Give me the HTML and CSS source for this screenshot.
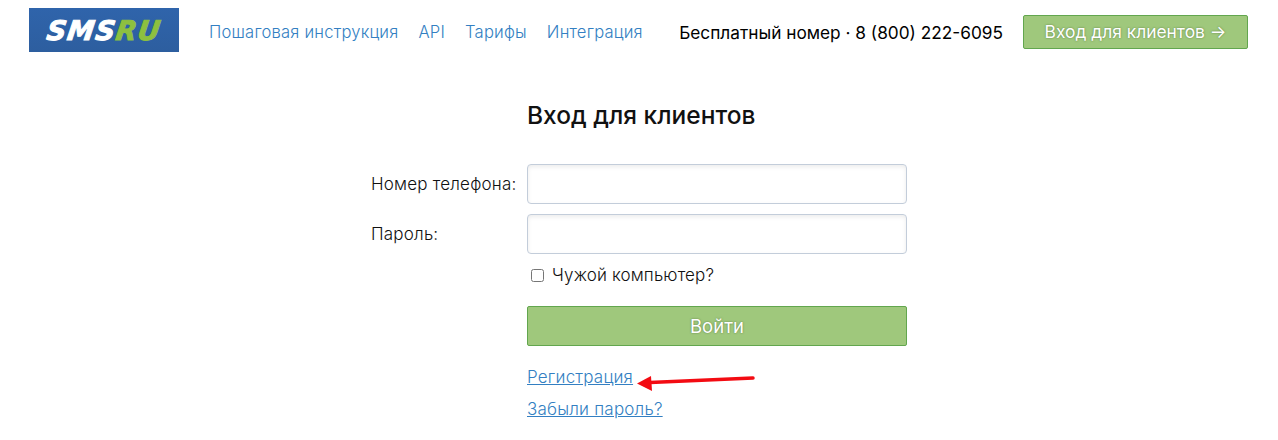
FILE: index.html
```html
<!DOCTYPE html>
<html lang="ru">
<head>
<meta charset="utf-8">
<title>Вход для клиентов</title>
<link rel="stylesheet" href="styles.css">
</head>
<body>
<header class="header">
  <a class="logo" href="#"><span class="logo-sms">SMS</span><span class="logo-ru">RU</span></a>
  <nav class="nav">
    <a href="#">Пошаговая инструкция</a>
    <a href="#">API</a>
    <a href="#">Тарифы</a>
    <a href="#">Интеграция</a>
  </nav>
  <div class="phone">Бесплатный номер · 8 (800) 222-6095</div>
  <a class="btn btn-head" href="#">Вход для клиентов →</a>
</header>
<main class="login">
  <h1 class="title">Вход для клиентов</h1>
  <label class="label" for="tel">Номер телефона:</label>
  <input class="input" id="tel" type="text">
  <label class="label" for="pwd">Пароль:</label>
  <input class="input" id="pwd" type="password">
  <label class="check">
    <input class="checkbox" type="checkbox">
    <span>Чужой компьютер?</span>
  </label>
  <button class="btn btn-submit" type="button">Войти</button>
  <div class="links">
    <a href="#">Регистрация</a>
    <a href="#">Забыли пароль?</a>
  </div>
</main>
<svg class="arrow" width="130" height="24" viewBox="0 0 130 24" aria-hidden="true">
  <path d="M117 7 L14 11.500" stroke="#f30b12" stroke-width="3.500" stroke-linecap="round" fill="none"/>
  <path d="M1 12.500 L15 5 L16 20 Z" fill="#f30b12"/>
</svg>
</body>
</html>
```
FILE: styles.css
```css
* { box-sizing: border-box; }
html, body { margin: 0; height: 440px; overflow: hidden; }
body { background: #fff; color: #111; font-family: "Inter", "Liberation Sans", sans-serif; font-size: 16px; position: relative; }
a { color: #337fc2; text-decoration: none; }

.header { display: flex; align-items: center; height: 60px; padding: 8px 30px 8px 29px; }
.logo { flex: none; display: flex; align-items: center; justify-content: center; width: 150px; height: 44px; background: linear-gradient(#2f64ab, #2d5e9f); font-family: "DejaVu Sans", sans-serif; font-size: 27px; font-weight: 700; font-style: italic; letter-spacing: 1.2px; -webkit-text-stroke: 1px currentColor; }
.logo-sms, .logo-ru { display: inline-block; transform: skewX(-8deg); }
.logo-sms { color: #fff; }
.logo-ru { color: #8dc03f; }
.nav { display: flex; gap: 20px; margin-left: 30px; margin-top: 4px; font-size: 16.6px; font-weight: 300; letter-spacing: .2px; }
.phone { margin-left: auto; margin-top: 4px; font-size: 17.25px; color: #000; white-space: nowrap; }
.btn { display: flex; align-items: center; justify-content: center; background: #9fc87c; border: 1px solid #62a64e; border-radius: 2px; color: #fff; font-family: inherit; text-shadow: 0 0 2px rgba(60,90,40,.7); }
.btn-head { width: 225px; height: 34px; margin-left: 20px; font-size: 17.4px; margin-top: 3px; }

.login { display: grid; grid-template-columns: 156px 380px; align-items: start; padding-left: 371px; margin-top: 27px; }
.title { grid-column: 2; margin: 0 0 32px; font-size: 24.5px; font-weight: 500; height: 45px; line-height: 56px; color: #111; }
.label { grid-column: 1; font-size: 17px; font-weight: 300; letter-spacing: .2px; line-height: 40px; color: #111; }
.input { grid-column: 2; width: 380px; height: 40px; margin-bottom: 10px; border: 1px solid #c3cdda; border-radius: 4px; background: #fff; box-shadow: inset 0 2px 4px rgba(0,0,0,.08); }
.check { grid-column: 2; display: flex; align-items: center; gap: 8px; height: 22px; color: #111; font-size: 17px; font-weight: 300; letter-spacing: .15px; padding-left: 4px; }
.checkbox { margin: 0; width: 13px; height: 13px; }
.btn-submit { grid-column: 2; width: 380px; height: 40px; margin-top: 20px; font-size: 18.5px; }
.links { grid-column: 2; display: flex; flex-direction: column; align-items: flex-start; gap: 12px; margin-top: 21px; font-size: 17px; font-weight: 300; letter-spacing: .2px; line-height: 20px; }
.links a { text-decoration: underline; }

.arrow { position: absolute; left: 636px; top: 371px; }
```
